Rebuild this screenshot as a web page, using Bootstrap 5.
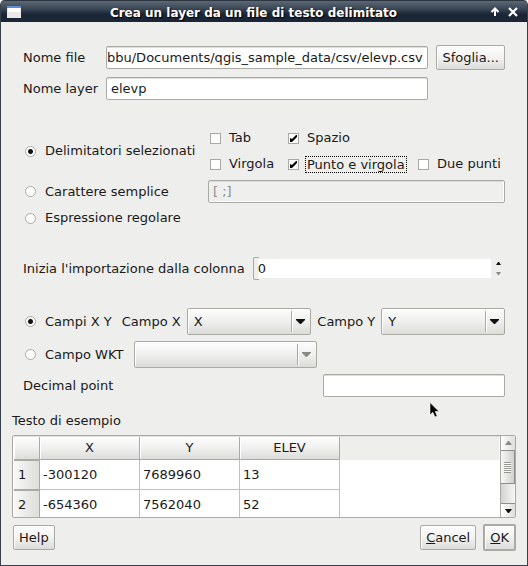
<!DOCTYPE html>
<html lang="it">
<head>
<meta charset="utf-8">
<meta name="viewport" content="width=device-width, initial-scale=1">
<title>Crea un layer da un file di testo delimitato</title>
<link rel="stylesheet" href="https://cdn.jsdelivr.net/npm/bootstrap@5.3.0/dist/css/bootstrap.min.css">
<style>
:root { --edge: #a9aaa3; --face: #eeeeec; --frame: #37404c; }
body { background: #fff; color: #1a1a1a; font: 13px/20px "DejaVu Sans", sans-serif; }
input, select, button { font: inherit; color: inherit; }
.dialog-window { background: var(--face); border: 1px solid var(--frame); border-top: 0; border-radius: 5px 5px 0 0; }
.title-bar { height: 22px; padding: 0 9px 0 6px; color: #fff; border-radius: 4px 4px 0 0; border-top: 1px solid #2b3542;
  background: linear-gradient(#5c6873, #3c4856 35%, #1a2535 65%, #1b2636); }
.title-text { font-size: 12px; font-weight: bold; padding: 3px 4px 0 0; text-shadow: 1px 1px 1px #000; }
.title-btn { border: 0; background: none; padding: 0; line-height: 0; }
.form-area { padding: 23px 22px 0; }
.labels-col { width: 83px; }
.field { height: 23px; min-width: 0; padding: 0 4px; background: #fff; border: 1px solid var(--edge); border-radius: 2px; box-shadow: inset 0 1px #dcdcd8; }
.field:disabled { background: #efefed; color: #8e8e8c; box-shadow: inset -1px -1px #fff, inset 0 1px #dcdcd8; }
.path-field { padding: 0; }
.file-fields { width: 322px; flex: 0 1 322px; }
.push { height: 25px; padding: 0 5px; border: 1px solid var(--edge); border-radius: 2px; background: linear-gradient(#fdfdfd, #f2f2f1 50%, #dcdcd9); box-shadow: inset 1px 1px #fff; line-height: 22px; }
.push-default { height: 27px; border-width: 2px; }
.tick, .dot { appearance: none; flex: none; width: 11px; height: 11px; margin: 0; border: 1px solid var(--edge); background: #fff center no-repeat; }
.dot { border-radius: 50%; margin-left: 2px; }
.dot:checked { background-image: radial-gradient(circle, #111 0 2px, transparent 3px); }
.tick:checked { background-image: url("data:image/svg+xml,%3Csvg xmlns='http://www.w3.org/2000/svg' width='9' height='9'%3E%3Cpath d='M1 4l2 1 4-4h1v2L3 8H1z' fill='%23000'/%3E%3C/svg%3E"); }
.option { gap: 9px; }
.option-text { white-space: nowrap; }
.delimiters { display: grid; grid-template-columns: 78px 130px auto; grid-auto-rows: 26px; align-items: center; padding-left: 2px; }
.delimiters .option { gap: 8px; }
.focused-text { outline: 1px dotted #000; line-height: 15px; padding: 0 1px; margin: 0 -1px; }
.layer-row { margin-top: 7px; }
.delim-row { margin-top: 25px; }
.char-row { margin-top: 3px; }
.regex-row { margin-top: 5px; }
.block-row { margin-top: 29px; }
.fields-row { margin-top: 28px; }
.tight-row { margin-top: 6px; }
.delim-left { width: 185px; }
.right-field { flex: 1 1 0; }
.combo { appearance: none; height: 27px; min-width: 0; padding: 0 30px 0 6px; border: 1px solid var(--edge); border-radius: 2px; box-shadow: inset 1px 1px #fff;
  background: url("data:image/svg+xml,%3Csvg xmlns='http://www.w3.org/2000/svg' width='19' height='21'%3E%3Cpath d='M.5 0v21' stroke='%23a9aaa3'/%3E%3Cpath d='M1.500 0v21' stroke='%23fff'/%3E%3Cpath d='M5 8h9v1l-4 4H9L5 9z' fill='%23111'/%3E%3C/svg%3E") right 0 center no-repeat, linear-gradient(#fdfdfd, #efefee 50%, #dcdcd9); }
.combo:disabled { opacity: 1; background: url("data:image/svg+xml,%3Csvg xmlns='http://www.w3.org/2000/svg' width='19' height='21'%3E%3Cpath d='M.5 0v21' stroke='%23a9aaa3'/%3E%3Cpath d='M1.500 0v21' stroke='%23fff'/%3E%3Cpath d='M6 9h9v1l-4 4h-1z' fill='%23fff'/%3E%3Cpath d='M5 8h9v1l-4 4H9L5 9z' fill='%23898987'/%3E%3C/svg%3E") right 0 center no-repeat, linear-gradient(#fdfdfd, #efefee 50%, #dcdcd9); }
.combo-label { margin: 0 6px; white-space: nowrap; }
.combo-label-first { margin-left: 10px; }
.spin-cap { width: 6px; height: 23px; border: 1px solid var(--edge); border-right: 0; border-radius: 2px 0 0 2px; }
.spin-input { appearance: textfield; border: 0; height: 19px; min-width: 0; margin-left: -1px; padding: 0; background: #fff; }
.spin-input::-webkit-inner-spin-button { appearance: none; }
.spin-steps { width: 14px; gap: 6px; }
.spin-steps button { border: 0; padding: 0; background: none; line-height: 0; }
.wkt-label { margin-right: 11px; }
.wkt-combo { width: 183px; }
.decimal-field { width: 182px; }
.sample { padding: 14px 11px 0; }
.sample-frame { height: 83px; margin-top: 4px; border: 1px solid var(--edge); border-radius: 2px; background: #fff; }
.sample-view { padding: 1px; box-shadow: inset 0 1px #e0e0dc; }
.head-strip { background: linear-gradient(var(--face) 23px, #fff 23px); }
.sample-table { border-collapse: separate; border-spacing: 0; table-layout: fixed; width: 326px; }
.sample-table th { font-weight: normal; padding: 0; border: solid var(--edge); border-width: 0 1px 1px 0; background: linear-gradient(#fdfdfd, #f0f0ef 50%, #dcdcd9); box-shadow: inset 1px 1px #fff; }
.sample-table thead th { height: 23px; text-align: center; }
.sample-table tbody th { padding-left: 4px; background: linear-gradient(90deg, #f8f8f7, #ddddda); border-width: 1px 1px 1px 0; box-shadow: none; }
.sample-table td { height: 30px; padding: 0 3px; border: solid #c0c0c0; border-width: 0 1px 1px 0; }
.row-head { width: 26px; }
.scroller { width: 15px; border-left: 1px solid var(--edge); background: linear-gradient(90deg, #d4d4d2, #f6f6f5); }
.scroller button { height: 14px; padding: 0; border: 0; line-height: 0; background: linear-gradient(90deg, #fff, #dededc); }
.scroller .step-down { border-top: 1px solid #8e8e8a; }
.thumb { height: 34px; border: 1px solid #8e8e8a; border-left: 0; background: linear-gradient(90deg, #f8f8f7, #d0d0ce); }
.grip { width: 7px; height: 11px; background: repeating-linear-gradient(#969693 0 1px, #fff 1px 2px); }
.actions { padding: 6px 11px 13px 12px; gap: 7px; }
.pointer { left: 428px; top: 402px; pointer-events: none; }
</style>
<script src="https://cdn.jsdelivr.net/npm/bootstrap@5.3.0/dist/js/bootstrap.bundle.min.js"></script>
</head>
<body>
<main class="dialog-window position-relative min-vh-100 d-flex flex-column">
  <header class="title-bar d-flex align-items-center">
    <svg width="14" height="12" aria-hidden="true"><path d="M0 0h14v12H0z" fill="#e9e9e6"/><path d="M0 0h14v2H0z" fill="#5f8fce"/><path d="M1 2h12v4H1z" fill="#fff"/></svg>
    <div class="title-text flex-grow-1 text-center">Crea un layer da un file di testo delimitato</div>
    <div class="d-flex align-items-center gap-2">
      <button class="title-btn" aria-label="Riduci"><svg width="10" height="10"><path d="M5 9V2M1.500 5L5 1.500 8.500 5" fill="none" stroke="#fff" stroke-width="2"/></svg></button>
      <button class="title-btn" aria-label="Chiudi"><svg width="10" height="10"><path d="M1 1l8 8M9 1L1 9" stroke="#fff" stroke-width="2.200"/></svg></button>
    </div>
  </header>

  <form class="form-area">
    <div class="d-flex align-items-center">
      <label class="labels-col" for="file">Nome file</label>
      <input class="field path-field file-fields" id="file" type="text" value="bbu/Documents/qgis_sample_data/csv/elevp.csv">
      <button class="push ms-auto" type="button">Sfoglia...</button>
    </div>
    <div class="layer-row d-flex align-items-center">
      <label class="labels-col" for="layer">Nome layer</label>
      <input class="field file-fields" id="layer" type="text" value="elevp">
    </div>

    <div class="delim-row d-flex align-items-center">
      <label class="option delim-left d-flex align-items-center"><input class="dot" type="radio" name="mode" checked><span class="option-text">Delimitatori selezionati</span></label>
      <div class="delimiters flex-grow-1">
        <label class="option d-flex align-items-center"><input class="tick" type="checkbox"><span class="option-text">Tab</span></label>
        <label class="option d-flex align-items-center"><input class="tick" type="checkbox" checked><span class="option-text">Spazio</span></label>
        <span></span>
        <label class="option d-flex align-items-center"><input class="tick" type="checkbox"><span class="option-text">Virgola</span></label>
        <label class="option d-flex align-items-center"><input class="tick" type="checkbox" checked><span class="option-text focused-text">Punto e virgola</span></label>
        <label class="option d-flex align-items-center"><input class="tick" type="checkbox"><span class="option-text">Due punti</span></label>
      </div>
    </div>
    <div class="char-row d-flex align-items-center">
      <label class="option delim-left d-flex align-items-center"><input class="dot" type="radio" name="mode"><span class="option-text">Carattere semplice</span></label>
      <input class="field right-field" type="text" value="[ ;]" aria-label="Delimitatore" disabled>
    </div>
    <label class="regex-row option d-flex align-items-center"><input class="dot" type="radio" name="mode"><span class="option-text">Espressione regolare</span></label>

    <div class="block-row d-flex align-items-center">
      <label class="option-text me-2" for="start">Inizia l'importazione dalla colonna</label>
      <span class="spin-cap"></span>
      <input class="spin-input flex-grow-1" id="start" type="number" value="0">
      <div class="spin-steps d-flex flex-column align-items-center">
        <button type="button" aria-label="Aumenta"><svg width="5" height="4"><path d="M0 3h5L3 0H2z" fill="#111"/></svg></button>
        <button type="button" aria-label="Diminuisci"><svg width="5" height="4"><path d="M0 0h5L3 3H2z" fill="#898987"/></svg></button>
      </div>
    </div>

    <div class="fields-row d-flex align-items-center">
      <label class="option d-flex align-items-center"><input class="dot" type="radio" name="geom" checked><span class="option-text">Campi X Y</span></label>
      <label class="combo-label combo-label-first" for="cx">Campo X</label>
      <select class="combo flex-fill" id="cx"><option>X</option></select>
      <label class="combo-label" for="cy">Campo Y</label>
      <select class="combo flex-fill" id="cy"><option>Y</option></select>
    </div>
    <div class="tight-row d-flex align-items-center">
      <label class="option wkt-label d-flex align-items-center"><input class="dot" type="radio" name="geom"><span class="option-text">Campo WKT</span></label>
      <select class="combo wkt-combo" aria-label="Campo WKT" disabled><option></option></select>
    </div>
    <div class="tight-row d-flex align-items-center">
      <label for="dec">Decimal point</label>
      <input class="field decimal-field ms-auto" id="dec" type="text">
    </div>
  </form>

  <section class="sample">
    <div>Testo di esempio</div>
    <div class="sample-frame d-flex overflow-hidden">
      <div class="sample-view flex-grow-1 overflow-hidden">
        <div class="head-strip">
          <table class="sample-table">
            <thead><tr><th class="row-head"></th><th>X</th><th>Y</th><th>ELEV</th></tr></thead>
            <tbody>
              <tr><th>1</th><td>-300120</td><td>7689960</td><td>13</td></tr>
              <tr><th>2</th><td>-654360</td><td>7562040</td><td>52</td></tr>
            </tbody>
          </table>
        </div>
      </div>
      <div class="scroller d-flex flex-column">
        <button type="button" aria-label="Su"><svg width="7" height="4"><path d="M0 4h7L4 0H3z" fill="#898987"/></svg></button>
        <div class="thumb d-flex align-items-center justify-content-center"><div class="grip"></div></div>
        <button class="step-down mt-auto" type="button" aria-label="Giù"><svg width="7" height="4"><path d="M0 0h7L4 4H3z" fill="#111"/></svg></button>
      </div>
    </div>
  </section>

  <footer class="actions d-flex align-items-center">
    <button class="push me-auto" type="button">Help</button>
    <button class="push" type="button"><u>C</u>ancel</button>
    <button class="push push-default" type="button"><u>O</u>K</button>
  </footer>

  <svg class="pointer position-absolute" width="11" height="17" aria-hidden="true"><path d="M1 .5v12.500L3.800 10.300l2.200 4.700 2.200-1-2-4.500H10z" fill="#000" stroke="#fff" stroke-width=".6"/></svg>
</main>
</body>
</html>
